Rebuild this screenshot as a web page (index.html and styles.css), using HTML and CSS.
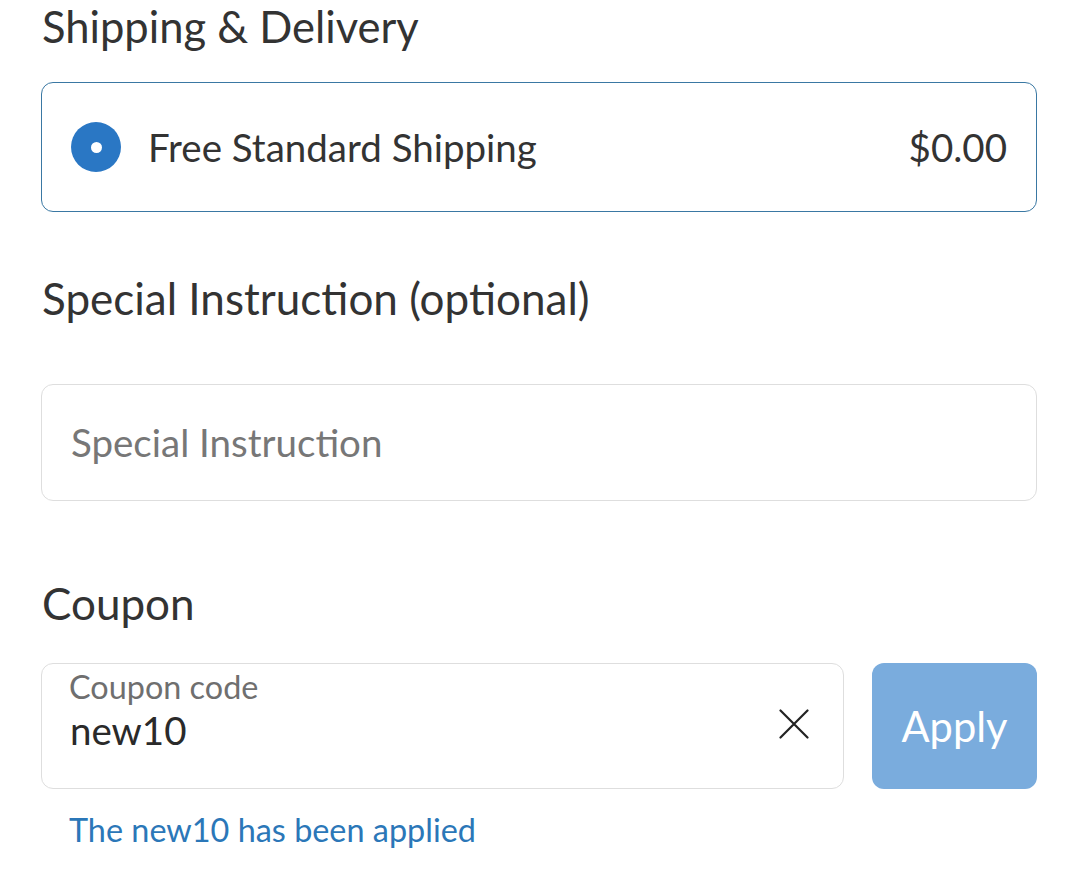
FILE: index.html
```html
<!DOCTYPE html>
<html lang="en">
<head>
<meta charset="utf-8">
<title>Checkout</title>
<link rel="stylesheet" href="styles.css">
</head>
<body>
<main class="checkout">
  <h2 class="section-title title-shipping">Shipping &amp; Delivery</h2>
  <label class="ship-option">
    <span class="radio"><span class="radio-dot"></span></span>
    <span class="ship-name">Free Standard Shipping</span>
    <span class="ship-price">$0.00</span>
  </label>

  <h2 class="section-title title-instruction">Special Instruction (optional)</h2>
  <div class="instruction-box">
    <span class="placeholder">Special Instruction</span>
  </div>

  <h2 class="section-title title-coupon">Coupon</h2>
  <div class="coupon-row">
    <div class="coupon-field">
      <div class="coupon-text">
        <span class="coupon-label">Coupon code</span>
        <span class="coupon-value">new10</span>
      </div>
      <svg class="clear-icon" width="30" height="30" viewBox="0 0 30 30" aria-hidden="true">
        <path d="M1.5 1.5 L28.5 28.5 M28.5 1.5 L1.5 28.5" stroke="#222" stroke-width="2.2" stroke-linecap="round" fill="none"/>
      </svg>
    </div>
    <button class="apply-btn" type="button">Apply</button>
  </div>
  <p class="coupon-msg">The new10 has been applied</p>
</main>
</body>
</html>
```

FILE: styles.css
```css
* { box-sizing: border-box; }

html, body {
  margin: 0;
  padding: 0;
  background: #ffffff;
}

body {
  font-family: Lato, "Open Sans", "Liberation Sans", sans-serif;
  color: #333333;
}

.checkout {
  width: 1079px;
  padding: 0 42px 0 41px;
  display: flex;
  flex-direction: column;
}

.section-title {
  margin: 0;
  font-size: 44px;
  line-height: 52px;
  font-weight: 400;
  color: #333333;
  padding-left: 1px;
}

.title-shipping { margin-top: 0; font-size: 43.5px; }
.title-instruction { margin-top: 60px; }
.title-coupon { margin-top: 76px; }

.ship-option {
  margin-top: 30px;
  height: 130px;
  border: 1.8px solid #3a78a3;
  border-radius: 12px;
  display: flex;
  align-items: center;
  padding: 0 29px 0 29px;
}

.radio {
  width: 50px;
  height: 50px;
  border-radius: 50%;
  background: #2a77c4;
  display: flex;
  align-items: center;
  justify-content: center;
  flex: none;
}

.radio-dot {
  width: 11px;
  height: 11px;
  border-radius: 50%;
  background: #ffffff;
}

.ship-name {
  margin-left: 27px;
  font-size: 38.5px;
  line-height: 44px;
  color: #333333;
  flex: 1;
}

.ship-price {
  font-size: 38.5px;
  line-height: 44px;
  color: #333333;
}

.instruction-box {
  margin-top: 60px;
  height: 117px;
  border: 1.6px solid #dedede;
  border-radius: 12px;
  padding: 35px 29px 0 29px;
}

.placeholder {
  display: block;
  font-size: 38.5px;
  line-height: 44px;
  color: #777777;
}

.coupon-row {
  margin-top: 34px;
  display: flex;
  gap: 28px;
  align-items: stretch;
}

.coupon-field {
  flex: 1;
  height: 126px;
  border: 1.6px solid #dedede;
  border-radius: 12px;
  display: flex;
  align-items: center;
  padding: 0 34px 0 27px;
}

.coupon-text {
  flex: 1;
  display: flex;
  flex-direction: column;
  align-self: flex-start;
  padding-top: 4px;
}

.coupon-label {
  font-size: 32.4px;
  line-height: 38px;
  color: #6f6f6f;
}

.coupon-value {
  margin-top: 2px;
  font-size: 38.5px;
  line-height: 44px;
  color: #2a2a2a;
  padding-left: 1px;
}

.clear-icon {
  flex: none;
  margin-top: -5px;
}

.apply-btn {
  width: 165px;
  height: 126px;
  border: none;
  border-radius: 12px;
  background: #7aacdd;
  color: #ffffff;
  font-family: Lato, "Open Sans", "Liberation Sans", sans-serif;
  font-size: 41.6px;
  padding: 0;
}

.coupon-msg {
  margin: 21px 0 0 28px;
  font-size: 32.4px;
  line-height: 40px;
  color: #2b77b8;
}
```
